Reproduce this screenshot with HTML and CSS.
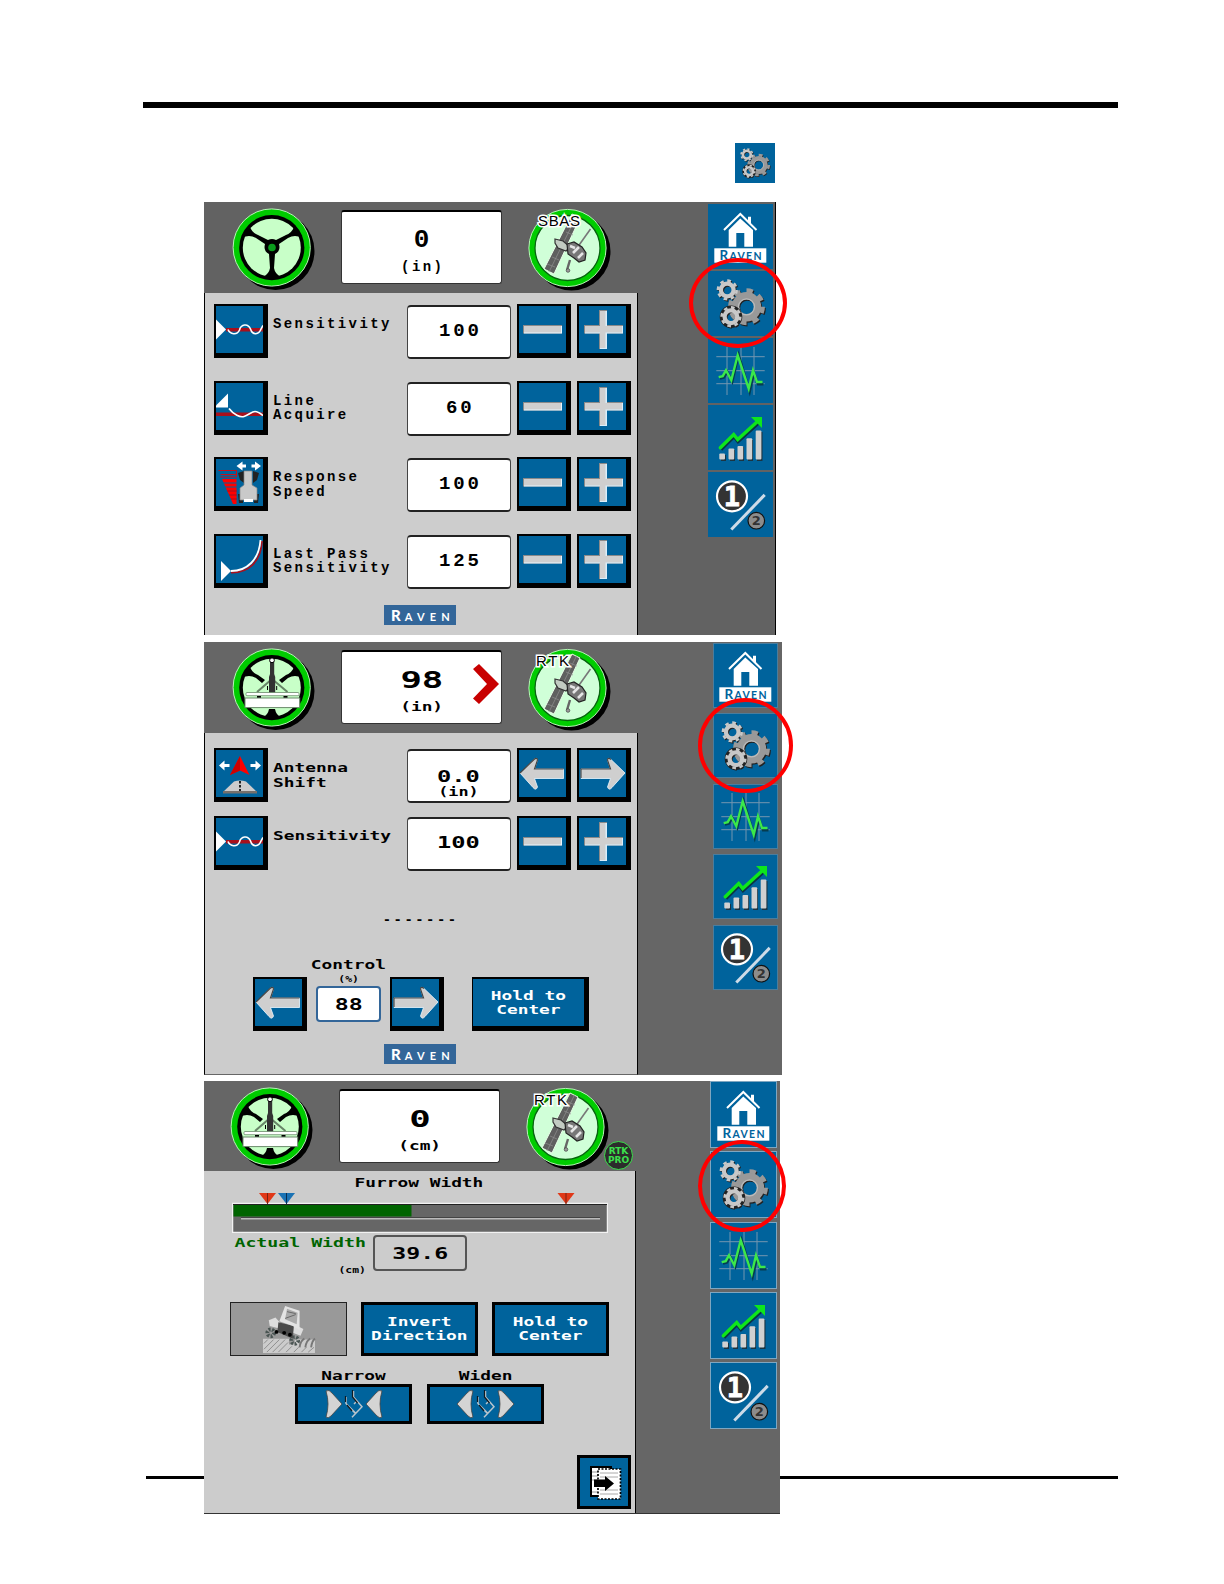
FILE: index.html
```
<!DOCTYPE html>
<html lang="en">
<head>
    <meta charset="UTF-8">
    <meta name="viewport" content="width=device-width, initial-scale=1.0">
    <title>Raven Settings</title>
    <link rel="stylesheet" href="styles.css">
</head>
<body>
    <!-- Shared icons -->
    <svg class="sprite">
        <symbol id="gear" viewBox="-20 -20 40 40">
            <circle r="16.6" pathLength="16" stroke-width="4.6" stroke-dasharray="1 1"/>
            <circle r="11.3" stroke-width="7.6"/>
        </symbol>
        <symbol id="gears" viewBox="0 0 65 65">
            <g fill="none" stroke="#222">
                <use href="#gear" x="20" y="17.5" width="39" height="39"/>
                <use href="#gear" x="9" y="8.8" width="22.5" height="22.5"/>
                <use href="#gear" x="12.5" y="35.8" width="22.5" height="22.5"/>
            </g>
            <use href="#gear" x="19" y="16.3" width="39" height="39" fill="none" stroke="#999"/>
            <circle cx="38.5" cy="35.8" r="8" fill="none" stroke="#bbb" stroke-width="1.2"/>
            <g fill="none" stroke="#c8c8c8">
                <circle cx="23" cy="45.7" r="9.3" stroke="#222" stroke-width="4"/>
                <use href="#gear" x="8" y="7.7" width="22.5" height="22.5"/>
                <use href="#gear" x="11.7" y="34.5" width="22.5" height="22.5"/>
            </g>
        </symbol>
        <symbol id="home" viewBox="0 0 65 65">
            <path d="M16 26L32.3 10L48.5 26" fill="none" stroke="#fff" stroke-width="2"/>
            <path d="M40 17v-4.3h3v7zM20.7 42.7V26L32.3 14.5L45 26v16.7h-8.7V29h-8v13.7z" fill="#fff"/>
            <rect x="6.3" y="44.3" width="52" height="14.4" fill="#fff"/>
            <text x="11.5" y="56" class="raven-text" textLength="42"><tspan font-size="13.5">R</tspan>AVEN</text>
        </symbol>
        <symbol id="wave" viewBox="0 0 65 65">
            <path d="M19 9v48M33 9v48M46 9v48M8.3 18.7h48.4M8.3 32.7h48.4M8.3 45.7h48.4" stroke="#7397b0" fill="none"/>
            <path d="M12 40.5l4-1l3.3-5.7l5 10l6.4-27l11 37l4.3-19l4 11.5h5.5" fill="none" stroke="#053d50" stroke-width="2.4"/>
            <path d="M10.7 39.2l4-1l3.3-5.9l5.3 10l6.4-25l11 33.400l4.3-18.400l4 11.7h5.5" fill="none" stroke="#3be84a" stroke-width="2.4"/>
        </symbol>
        <symbol id="chart" viewBox="0 0 65 65">
            <path d="M13 50h5v6h-5zM22 45h5v11h-5zM31 42h5v14h-5zM40 35h5v21h-5zM49 27h5.5v29H49z" fill="#1b3442"/>
            <g fill="#d0d0d0">
                <rect x="11.3" y="48.5" width="5.7" height="6" rx="1"/>
                <rect x="20.5" y="43.5" width="5.7" height="11" rx="1"/>
                <rect x="29.5" y="41" width="5.7" height="13.5" rx="1"/>
                <rect x="38.5" y="33.2" width="5.7" height="21.3" rx="1"/>
                <rect x="47.7" y="25.4" width="5.7" height="29.1" rx="1"/>
            </g>
            <path d="M13 44.5L26 31.5l4 5L50 18.5" fill="none" stroke="#0b3345" stroke-width="3.4"/>
            <path d="M12.3 42.7L25.7 29.5l4 5L50 16" fill="none" stroke="#0ee61c" stroke-width="3.4" stroke-linecap="round"/>
            <path d="M43 12h11v11z" fill="#0ee61c"/>
        </symbol>
        <symbol id="one-two" viewBox="0 0 65 65">
            <path d="M56.7 22.9L23.3 57.5" stroke="#cddbe8" stroke-width="3"/>
            <circle cx="24" cy="24.3" r="15" fill="#333" stroke="#fff" stroke-width="2.2"/>
            <text x="24" y="33.8" text-anchor="middle" class="num-one">1</text>
            <circle cx="48.3" cy="48.7" r="8.3" fill="#8c8c8c" stroke="#111" stroke-width="1.2"/>
            <text x="48.3" y="53.4" text-anchor="middle" class="num-two">2</text>
        </symbol>
        <symbol id="wheel-base" viewBox="0 0 84 84">
            <circle cx="43.5" cy="43" r="39" fill="#000"/>
            <circle cx="39.7" cy="39.5" r="38.6" fill="#0c0" stroke="#b6f5b6" stroke-width="1"/>
            <circle cx="39.8" cy="39.7" r="32.6" fill="#000"/>
            <circle cx="39.8" cy="39.7" r="29" fill="#c8ffc8"/>
        </symbol>
        <symbol id="wheel" viewBox="0 0 84 84">
            <use href="#wheel-base"/>
            <path d="M10 30L17 17Q20 25 26 27L36 32Q40 30 44 32L54 27Q60 25 63 17L70 30Q63 26 56 30L47 36Q49 43 43 46L42 60Q43 66 49 69H31Q37 66 38 60L37 46Q31 43 33 36L24 30Q17 26 10 30z"/>
            <circle cx="40" cy="39.5" r="3.8" fill="#0a9c1c"/>
        </symbol>
        <symbol id="implement" viewBox="0 0 84 84">
            <use href="#wheel-base"/>
            <path d="M10 30L17 17Q20 25 26 27L33 32L30 35L24 30Q17 26 10 30zM70 30L63 17Q60 25 54 27L47 32L50 35L56 30Q63 26 70 30zM31 69Q36 67 37 61h6Q44 67 49 69z"/>
            <path d="M40 31L25 44M40 31L55.5 44" stroke="#678567" stroke-width="2"/>
            <path d="M35.5 38v4M44.7 38v4" stroke="#000"/>
            <path d="M38 14h4.2v12l1 3v16H37V29l1-3z" fill="#333"/>
            <circle cx="40" cy="12.3" r="2.4" fill="#fff" stroke="#000"/>
            <rect x="14" y="44.5" width="53" height="3.2" rx="1" fill="#fff" stroke="#6a8a6a" stroke-width=".8"/>
            <path d="M25 48h4v2h-4zM51.5 48h4v2h-4z"/>
            <rect x="13" y="50" width="54.7" height="9.6" fill="#fff" stroke="#6a8a6a"/>
        </symbol>
        <symbol id="satellite" viewBox="0 0 84 84">
            <circle cx="44.5" cy="43.5" r="39" fill="#000"/>
            <circle cx="40.5" cy="40" r="38.6" fill="#0c0" stroke="#b6f5b6"/>
            <circle cx="40.5" cy="40" r="32.5" fill="#d0ffd8" stroke="#07640f" stroke-width="1.3"/>
            <path d="M45 6l8 4-26 56-10-5z" fill="#5f5f5f" stroke="#e8ffe8"/>
            <path d="M49.5 8L22 64M43 15l7 3M39 24l7 3M25 49l7 3M20 56l8 3" stroke="#8f8f8f" stroke-width=".7"/>
            <path d="M63.500 21L50 40" stroke="#777" stroke-width="1.6"/>
            <path d="M43 52l-3 10" stroke="#666" stroke-width="2.4"/>
            <circle cx="41" cy="62.5" r="1.8" fill="#9a9a9a" stroke="#444" stroke-width=".7"/>
            <path d="M28 31l8 2 7 6-4 4-8-3-3-5z" fill="#c2cbc2" stroke="#333" stroke-width="1.2"/>
            <path d="M40 36l7-2 8 5 4 6-1 7-6 2-5-4-6-4z" fill="#777" stroke="#222" stroke-width="1.2"/>
            <path d="M43 38l5 2M46 45l6-6M51 50l5-5" stroke="#e5e5e5" stroke-width="2.6"/>
        </symbol>
        <symbol id="minus" viewBox="0 0 47 47">
            <path d="M4 19h39v8.5H4z" fill="#8a8a8a"/>
            <path d="M5 20h38v7.5H5z" fill="#e9f6ff"/>
            <path d="M5 20h37v6.5H5z" fill="#cfcfcf"/>
        </symbol>
        <symbol id="plus" viewBox="0 0 47 47">
            <path d="M5 19h15V4h8v15h16v8.5H28V43h-8V27.5H5z" fill="#8a8a8a"/>
            <path d="M6 20h15V5h7v15h16v7.5H28V43h-7V27.5H6z" fill="#d9eefb"/>
            <path d="M6 20h15V5h5.5v15H43v6.5H26.5V42H21V26.5H6z" fill="#cfcfcf"/>
        </symbol>
        <symbol id="arrow-left" viewBox="0 0 47 47">
            <path d="M1 23L15 9.500Q18 7 18.500 10L15.500 19H44.500v9.500H15.500L18.500 37Q17 41 14 37.500z" fill="#cfcfcf" stroke="#ecf7ff" stroke-width=".8"/>
            <path d="M1 23L15 9.500Q18 7 18.500 10L15.500 19H44.500" fill="none" stroke="#444" stroke-width="1.2"/>
        </symbol>
        <symbol id="arrow-right" viewBox="0 0 47 47">
            <path d="M46 23L32 9.500Q29 7 28.500 10L31.500 19H2v9.500h29.500L28.500 37Q30 41 33 37.500z" fill="#cfcfcf" stroke="#ecf7ff" stroke-width=".8"/>
            <path d="M32 9.500Q29 7 28.500 10L31.500 19H2v9" fill="none" stroke="#444" stroke-width="1.2"/>
        </symbol>
        <symbol id="sensitivity" viewBox="0 0 47 47">
            <path d="M10 22h37v3.5H10z" fill="#a8101c"/>
            <path d="M0 13.5L10 23.5L0 33.5z" fill="#fff"/>
            <path d="M12 23.5C14 28.5 21 29.5 23.5 24C25 18 32 17 34.5 23C36.5 29.5 43 29 45 23L47 19.5" fill="none" stroke="#fff" stroke-width="1.6"/>
        </symbol>
        <symbol id="acquire" viewBox="0 0 47 47">
            <path d="M0 29.5h47V33H0z" fill="#a8101c"/>
            <path d="M0 22.5L12 10.5v14H0z" fill="#fff"/>
            <path d="M13 25.5C18 32 24 34.5 28 33.5S36 28.5 39 28.5S44 30 47 32.5" fill="none" stroke="#fff" stroke-width="1.7"/>
        </symbol>
        <symbol id="response" viewBox="0 0 47 47">
            <path d="M2.5 11.5h18v4h-16M4.5 18h16v-6" fill="none" stroke="#c4101c"/>
            <path d="M6 20h14.5v25H17z" fill="#f00"/>
            <path d="M7 24h14M9 28h12" stroke="#00639c"/>
            <path d="M11 32h10M13 36h8M15 40h6" stroke="#a01020"/>
            <path d="M20.5 7l6-4.5v3H30v3h-3.500v3zM45 7l-6-4.500v3h-3.500v3H39v3z" fill="#fff"/>
            <path d="M22 14l6-2v12l-4-3zM43 14l-6-2v12l4-3zM22 35h5v9h-4zM43 35h-5v9h4z" fill="#222"/>
            <path d="M28 12h8v14l5 3v12H24V29l4-3z" fill="#c9c9c9" stroke="#888" stroke-width=".7"/>
            <path d="M28 40h9v3h-9z" fill="#fff"/>
        </symbol>
        <symbol id="last-pass" viewBox="0 0 47 47">
            <path d="M15 36.5C32 37 45 26 46 5" fill="none" stroke="#a8101c" stroke-width="1.8"/>
            <path d="M15 35C31 35 43 24 44.5 4" fill="none" stroke="#fff" stroke-width="1.8"/>
            <path d="M5 25L15 35L5 45z" fill="#fff"/>
        </symbol>
        <symbol id="antenna" viewBox="0 0 47 47">
            <path d="M24 6l9.5 19L24 20.5L14 25z" fill="#f00"/>
            <path d="M24 6v14.5L14 25z" fill="#c00"/>
            <path d="M3 15.5l5.5-5v3.5h5v3h-5v3.5zM45 15.5l-5.500-5v3.500h-5v3h5v3.500z" fill="#fff"/>
            <path d="M7 42l11-10.500q6-2 12 0L41 42z" fill="#ccc"/>
            <path d="M7 41h34v2.5H7z" fill="#77706a"/>
            <path d="M24 31v10" stroke="#222" stroke-width="2" stroke-dasharray="2.5 1.5"/>
        </symbol>
        <symbol id="rail" viewBox="0 0 20 30">
            <path d="M2 8v6.500l10 10M9.500 2v6l8.500 9.700L8 28.300M8 21l4 4M13 12l-3 3" fill="none" stroke="#b9c4cc" stroke-width="1.5"/>
            <path d="M1.500 7v6M8.500 1v7l5 6M3 16l5 6" fill="none" stroke="#101a20" stroke-width="1.2"/>
        </symbol>
    </svg>

    <div class="page">
        <header class="page-header">
            <svg class="page-icon"><use href="#gears"/></svg>
        </header>
        <div class="page-rule"></div>

        <!-- Steering settings -->
        <section class="screen screen-one">
            <div class="main">
                <div class="top">
                    <svg class="round"><use href="#wheel"/></svg>
                    <div class="display"><b>0</b><span>(in)</span></div>
                    <svg class="round sat"><use href="#satellite"/><text x="11" y="18" class="fix" textLength="42">SBAS</text></svg>
                </div>
                <div class="body">
                    <div class="row">
                        <svg class="key"><use href="#sensitivity"/></svg>
                        <div class="label"><span>Sensitivity</span></div>
                        <div class="value"><span>100</span></div>
                        <svg class="key"><use href="#minus"/></svg>
                        <svg class="key"><use href="#plus"/></svg>
                    </div>
                    <div class="row">
                        <svg class="key"><use href="#acquire"/></svg>
                        <div class="label"><span>Line<br>Acquire</span></div>
                        <div class="value"><span>60</span></div>
                        <svg class="key"><use href="#minus"/></svg>
                        <svg class="key"><use href="#plus"/></svg>
                    </div>
                    <div class="row">
                        <svg class="key"><use href="#response"/></svg>
                        <div class="label"><span>Response<br>Speed</span></div>
                        <div class="value"><span>100</span></div>
                        <svg class="key"><use href="#minus"/></svg>
                        <svg class="key"><use href="#plus"/></svg>
                    </div>
                    <div class="row">
                        <svg class="key"><use href="#last-pass"/></svg>
                        <div class="label"><span>Last Pass<br>Sensitivity</span></div>
                        <div class="value"><span>125</span></div>
                        <svg class="key"><use href="#minus"/></svg>
                        <svg class="key"><use href="#plus"/></svg>
                    </div>
                    <div class="logo"><b>R</b>AVEN</div>
                </div>
            </div>
            <div class="side">
                <svg><use href="#home"/></svg>
                <svg><use href="#gears"/></svg>
                <svg><use href="#wave"/></svg>
                <svg><use href="#chart"/></svg>
                <svg><use href="#one-two"/></svg>
            </div>
            <div class="ring"></div>
        </section>

        <!-- Implement settings -->
        <section class="screen screen-two wide">
            <div class="main">
                <div class="top">
                    <svg class="round"><use href="#implement"/></svg>
                    <div class="display"><b>98</b><span>(in)</span>
                        <svg class="chevron" viewBox="0 0 26 40"><path d="M0 5L6 0L26 20L6 40L0 34.5L14 20z" fill="#c80000"/></svg>
                    </div>
                    <svg class="round sat"><use href="#satellite"/><text x="9" y="18" class="fix" textLength="33">RTK</text></svg>
                </div>
                <div class="body">
                    <div class="row">
                        <svg class="key"><use href="#antenna"/></svg>
                        <div class="label"><span>Antenna<br>Shift</span></div>
                        <div class="value with-unit"><span>0.0</span><small>(in)</small></div>
                        <svg class="key"><use href="#arrow-left"/></svg>
                        <svg class="key"><use href="#arrow-right"/></svg>
                    </div>
                    <div class="row">
                        <svg class="key"><use href="#sensitivity"/></svg>
                        <div class="label"><span>Sensitivity</span></div>
                        <div class="value"><span>100</span></div>
                        <svg class="key"><use href="#minus"/></svg>
                        <svg class="key"><use href="#plus"/></svg>
                    </div>
                    <div class="dashes">-------</div>
                    <div class="control">
                        <svg class="key"><use href="#arrow-left"/></svg>
                        <div class="control-box">
                            <span class="caption">Control</span>
                            <span class="unit">(%)</span>
                            <div class="percent"><span>88</span></div>
                        </div>
                        <svg class="key"><use href="#arrow-right"/></svg>
                        <div class="btn"><span>Hold to<br>Center</span></div>
                    </div>
                    <div class="logo"><b>R</b>AVEN</div>
                </div>
            </div>
            <div class="side">
                <svg><use href="#home"/></svg>
                <svg><use href="#gears"/></svg>
                <svg><use href="#wave"/></svg>
                <svg><use href="#chart"/></svg>
                <svg><use href="#one-two"/></svg>
            </div>
            <div class="ring"></div>
        </section>

        <!-- Furrow width -->
        <section class="screen screen-three wide">
            <div class="main">
                <div class="top">
                    <svg class="round"><use href="#implement"/></svg>
                    <div class="display"><b>0</b><span>(cm)</span></div>
                    <svg class="round sat"><use href="#satellite"/><text x="9" y="18" class="fix" textLength="33">RTK</text></svg>
                    <div class="pro">RTK<br>PRO</div>
                </div>
                <div class="body">
                    <div class="title"><span>Furrow Width</span></div>
                    <svg class="gauge" viewBox="0 0 376 40">
                        <rect x=".5" y="10.5" width="375" height="29" fill="#666" stroke="#f2f2f2" stroke-width="1.5"/>
                        <path d="M1 11.5h374" stroke="#222"/>
                        <rect x="1.5" y="12" width="178" height="11.5" fill="#006400"/>
                        <path d="M9 25.5h359" stroke="#bbb" stroke-width="2"/>
                        <path d="M9 24.5h359" stroke="#444"/>
                        <path d="M27 0h17l-8.5 11z" fill="#e03818"/><path d="M35.5 0v11" stroke="#7b2010"/>
                        <path d="M46 0h17l-8.5 11z" fill="#1a72b4"/><path d="M54.5 0v11" stroke="#082c50"/>
                        <path d="M325.5 0h17l-8.5 11z" fill="#e03818"/><path d="M334 0v11" stroke="#7b2010"/>
                    </svg>
                    <div class="actual">
                        <div class="actual-text"><span class="caption">Actual Width</span><span class="unit">(cm)</span></div>
                        <div class="actual-value"><span>39.6</span></div>
                    </div>
                    <div class="buttons">
                        <svg class="tractor" viewBox="0 0 117 54">
                            <path d="M32 37h27v6h6v-5h21v14H32z" fill="#ccc"/>
                            <path d="M33 42l4-4M33 48l10-10M36 51l13-13M42 51l13-13M48 51l10-10M56 51l6-6M64 51l5-5M72 51l5-5M79 51l6-5" stroke="#8d8d8d"/>
                            <path d="M70 46q1-7 5-9M76 46q1-7 5-9M82 46q1-7 4-9" fill="none" stroke="#777" stroke-width="2"/>
                            <g fill="none" stroke="#4a5553" stroke-width="4" stroke-dasharray="2 1.5"><circle cx="40" cy="31" r="3.5"/><circle cx="65" cy="39" r="3.5"/></g>
                            <path d="M38 18l7-3 7 8-5 3-8-2zM64 22l10 5-3 7-8-3z" fill="#ddd"/>
                            <path d="M48 20l16 4-1 13-16-7z" fill="#4a4a4a"/>
                            <path d="M55 3l15 5 0 20-7-4-14-5z" fill="#e3e3e3"/>
                            <path d="M57 6l11 4-1 12-12-5z" fill="#aaa"/><path d="M55 16l11-4M57 9l9 2" stroke="#666"/>
                            <circle cx="54" cy="31" r="2" fill="#000"/><circle cx="60" cy="33" r="2" fill="#000"/><circle cx="46" cy="30" r="2" fill="#000"/>
                        </svg>
                        <div class="btn"><span>Invert<br>Direction</span></div>
                        <div class="btn"><span>Hold to<br>Center</span></div>
                    </div>
                    <div class="moves">
                        <div class="move">
                            <span class="caption">Narrow</span>
                            <svg class="move-btn" viewBox="0 0 117 40">
                                <path d="M31 7q3-2 6 2l10 11-11 12q-3 3-5 1 4-13 0-26z" fill="#d4d4d4" stroke="#444" stroke-width=".8"/>
                                <path d="M87 7q-3-2-6 2L71 20l11 12q3 3 5 1-4-13 0-26z" fill="#d4d4d4" stroke="#444" stroke-width=".8"/>
                                <use href="#rail" x="49" y="5" width="20" height="30"/>
                            </svg>
                        </div>
                        <div class="move">
                            <span class="caption">Widen</span>
                            <svg class="move-btn" viewBox="0 0 117 40">
                                <path d="M46 7q-3-2-6 2L30 20l11 12q3 3 5 1-4-13 0-26z" fill="#d4d4d4" stroke="#444" stroke-width=".8"/>
                                <path d="M71 7q3-2 6 2l10 11-11 12q-3 3-5 1 4-13 0-26z" fill="#d4d4d4" stroke="#444" stroke-width=".8"/>
                                <use href="#rail" x="49" y="5" width="20" height="30"/>
                            </svg>
                        </div>
                    </div>
                    <svg class="next" viewBox="0 0 54 54">
                        <path d="M13 11h22v31H13z" fill="#000"/><path d="M15 13h18v27H15z" fill="#fff"/>
                        <path d="M15 17h18M15 21h18M15 25h18M15 37h18" stroke="#999"/>
                        <rect x="21" y="14" width="22.5" height="30" fill="#fff" stroke="#000" stroke-width="1.7" stroke-dasharray="2 1.5"/>
                        <path d="M23 18h18M23 22h18M23 35h18M23 39h18" stroke="#aaa"/>
                        <path d="M17 24.500h11V21l9 7.500-9 7.500v-4H17z"/>
                    </svg>
                </div>
            </div>
            <div class="side">
                <svg><use href="#home"/></svg>
                <svg><use href="#gears"/></svg>
                <svg><use href="#wave"/></svg>
                <svg><use href="#chart"/></svg>
                <svg><use href="#one-two"/></svg>
            </div>
            <div class="ring"></div>
        </section>
    </div>
</body>
</html>
```
FILE: styles.css
```
* {
    box-sizing: border-box;
}

body {
    margin: 0;
    background-color: #fff;
    font-family: "DejaVu Sans Mono", monospace;
    font-weight: bold;
    color: #000;
}

.sprite {
    display: none;
}

.page {
    position: relative;
    width: 1224px;
    height: 1584px;
    padding: 102px 106px 0 143px;
}

.page-header {
    height: 100px;
    border-top: 6px solid #000;
    padding: 35px 0 0 592px;
}

.page-icon {
    display: block;
    width: 40px;
    height: 40px;
    background-color: #00639c;
}

/* Footer line runs behind the last screen */
.page-rule {
    position: absolute;
    left: 146px;
    right: 106px;
    top: 1476px;
    height: 3px;
    background-color: #000;
}

/* Screens */
.screen {
    position: relative;
    display: flex;
    width: 572px;
    height: 433px;
    margin: 0 0 7px 61px;
    background-color: #626262;
}

.screen-one {
    border-right: 1px solid #000;
}

.screen-two {
    width: 578px;
    margin-bottom: 6px;
    background-color: #666;
}

.screen-three {
    width: 576px;
    background-color: #666;
    border-bottom: 1px solid #333;
}

.main {
    width: 434px;
    display: flex;
    flex-direction: column;
}

.screen-three .main {
    width: 432px;
}

.top {
    position: relative;
    display: flex;
    height: 91px;
    flex: none;
    padding: 6px 0 0 28px;
}

.screen-three .top {
    height: 90px;
    padding-left: 26px;
}

.round {
    width: 84px;
    height: 84px;
}

.sat {
    margin-left: 26px;
}

.fix {
    font: 15px "Liberation Sans", sans-serif;
    fill: #000;
    stroke: #fff;
    stroke-width: 3px;
    paint-order: stroke;
}

.display {
    position: relative;
    display: flex;
    flex-direction: column;
    align-items: center;
    width: 161px;
    height: 74px;
    margin: 2px -1px 0 25px;
    padding-top: 14px;
    background-color: #fff;
    border: 1px solid #333;
    border-top: 2px solid #000;
    border-radius: 3px;
}

.display b {
    font-size: 23px;
    line-height: 28px;
}

.display span {
    font-size: 13px;
    line-height: 18px;
    margin-top: 4px;
}

.screen-one .display b {
    font-size: 26px;
}

.screen-one .display span {
    font-size: 14px;
    letter-spacing: 2.4px;
    margin-right: -2.4px;
}

.wide .display b {
    transform: scaleX(1.55);
}

.wide .display span {
    transform: scaleX(1.37);
}

.chevron {
    position: absolute;
    right: 2px;
    top: 12px;
    width: 26px;
    height: 40px;
}

.pro {
    position: absolute;
    left: 400px;
    top: 60px;
    width: 29px;
    height: 29px;
    padding-top: 5px;
    border: 1px solid #3ce04c;
    border-radius: 50%;
    background-color: #2c2c2c;
    color: #3ce04c;
    font: bold 9px/9px "DejaVu Sans", sans-serif;
    text-align: center;
}

/* Settings area */
.body {
    flex: 1;
    padding: 11px 0 0 9px;
    background-color: #cdcdcd;
    border-left: 1px solid #000;
    border-right: 1px solid #000;
}

.wide .body {
    background-color: #ccc;
}

.screen-two .body {
    padding-top: 15px;
    border-bottom: 1px solid #666;
}

.screen-three .body {
    padding: 4px 0 0 26px;
    border-left: none;
}

.row {
    display: flex;
    height: 54px;
    margin-bottom: 22.7px;
}

.screen-two .row {
    margin-bottom: 14px;
}

.key {
    flex: none;
    width: 54px;
    height: 54px;
    margin-right: 6px;
    background-color: #00639c;
    border: solid #000;
    border-width: 2px 5px 5px 2px;
}

.label {
    width: 135px;
    margin-left: -1px;
    padding-top: 13px;
    font-size: 13px;
    line-height: 14.4px;
}

.label span {
    display: inline-block;
}

.screen-one .label {
    font-family: "Liberation Mono", monospace;
    font-size: 14px;
    letter-spacing: 2.4px;
    white-space: nowrap;
}

.wide .label {
    line-height: 14.8px;
    padding-left: -1px;
}

.wide .label span {
    transform: scaleX(1.37);
    transform-origin: left;
}

.value {
    display: flex;
    flex-direction: column;
    align-items: center;
    justify-content: center;
    width: 105px;
    height: 54px;
    margin: 1px 6px 0 0;
    padding-bottom: 4px;
    background-color: #fff;
    border: 1px solid #444;
    border-top: 2px solid #222;
    border-bottom: 2px solid #222;
    border-radius: 4px;
    font-size: 16px;
}

.screen-one .value,
.screen-one .display {
    font-family: "Liberation Mono", monospace;
}

.screen-one .value {
    padding-bottom: 2px;
    font-size: 19px;
}

.screen-one .value span {
    letter-spacing: 2.9px;
    margin-right: -2.9px;
}

.wide .value span {
    transform: scaleX(1.48);
}

.value.with-unit {
    padding: 14px 0 0;
}

.with-unit span {
    line-height: 19px;
}

.with-unit small {
    font-size: 12px;
    line-height: 13px;
    transform: scaleX(1.4);
}

.logo {
    width: 72px;
    height: 20px;
    margin: -6px 0 0 170px;
    padding-left: 7px;
    background-color: #336699;
    color: #fff;
    font: bold 11px/20px Lato, sans-serif;
    letter-spacing: 5.2px;
    white-space: nowrap;
}

.logo b {
    font-size: 15px;
    letter-spacing: 4px;
}

.dashes {
    margin: 41px 0 0 169px;
    font-size: 13px;
    line-height: 18px;
    letter-spacing: 3px;
}

.title span {
    display: inline-block;
    transform: scaleX(1.37);
    white-space: nowrap;
}

.control {
    display: flex;
    align-items: flex-end;
    height: 76px;
    margin: 26px 0 0 39px;
}

.control .key {
    margin: 0;
}

.control-box {
    display: flex;
    flex-direction: column;
    align-items: center;
    width: 83px;
    padding-bottom: 9px;
}

.caption {
    font-size: 13px;
    line-height: 16px;
    transform: scaleX(1.37);
    white-space: nowrap;
}

.unit {
    font-size: 9.5px;
    line-height: 12px;
    transform: scaleX(1.2);
}

.percent {
    width: 65px;
    height: 36px;
    margin-top: 1px;
    border: 2px solid #336699;
    border-radius: 4px;
    background-color: #fff;
    font-size: 16px;
    line-height: 33px;
    text-align: center;
}

.percent span,
.actual-value span {
    display: inline-block;
    transform: scaleX(1.45);
}

.btn {
    width: 117px;
    height: 54px;
    padding-top: 10px;
    background-color: #00639c;
    border: 3px solid #000;
    color: #fff;
    font-size: 13px;
    line-height: 14.4px;
    text-align: center;
    white-space: nowrap;
}

.btn span {
    display: inline-block;
    transform: scaleX(1.37);
}

.control .btn {
    margin-left: 28px;
    border-width: 2px 5px 5px 1px;
}

.screen-two .logo {
    margin-top: 13px;
}

/* Furrow width */
.title {
    margin-left: 126px;
    width: 126px;
    font-size: 13px;
    line-height: 16px;
    text-align: center;
}

.gauge {
    display: block;
    width: 376px;
    height: 40px;
    margin: 2px 0 0 2px;
}

.actual {
    display: flex;
    margin-top: 2px;
    height: 36px;
}

.actual-text {
    display: flex;
    flex-direction: column;
    width: 136px;
    align-items: flex-end;
    color: #006400;
}

.actual-text span {
    transform-origin: right;
}

.actual-text .caption {
    transform: scaleX(1.4);
}

.actual-text .unit {
    color: #000;
    margin-top: 13px;
}

.actual-value {
    width: 94px;
    height: 36px;
    margin-left: 7px;
    padding-top: 1px;
    border: 2px solid #555;
    border-radius: 4px;
    font-size: 16px;
    line-height: 32px;
    text-align: center;
}

.buttons {
    display: flex;
    gap: 14px;
    margin-top: 31px;
}

.tractor {
    width: 117px;
    height: 54px;
    background-color: #999;
    border: 1px solid #222;
}

.moves {
    display: flex;
    gap: 15px;
    margin: 12px 0 0 65px;
}

.move {
    display: flex;
    flex-direction: column;
    align-items: center;
    width: 117px;
}

.move-btn {
    width: 117px;
    height: 40px;
    background-color: #00639c;
    outline: 3px solid #000;
    outline-offset: -3px;
}

.next {
    display: block;
    width: 54px;
    height: 54px;
    margin: 31px 0 0 347px;
    background-color: #00639c;
    outline: 3px solid #000;
    outline-offset: -3px;
}

/* Side menu */
.side {
    display: flex;
    flex-direction: column;
    flex: 1;
    align-items: flex-end;
    gap: 2px;
    padding: 2px 2px 0 0;
}

.side svg {
    flex: none;
    width: 65px;
    height: 65px;
    background-color: #00639c;
}

.screen-two .side {
    gap: 5.4px;
    padding: 1px 4px 0 0;
}

.screen-two .side svg {
    outline: 1px solid #4b7d9d;
    outline-offset: -1px;
}

.screen-three .side {
    gap: 3.3px;
    padding: 0 3px 0 0;
}

.screen-three .side svg {
    width: 67px;
    height: 67px;
    border: 1px solid #7fa6c0;
}

.raven-text {
    font: bold 10.5px Lato, sans-serif;
    fill: #00639c;
}

.num-one {
    font: bold 27px "DejaVu Sans Mono", monospace;
    fill: #fff;
    stroke: #fff;
    stroke-width: 0.8px;
}

.num-two {
    font: bold 13px "DejaVu Sans", sans-serif;
    fill: #333;
}

/* Red marker around the settings button */
.ring {
    position: absolute;
    left: 485px;
    top: 56px;
    width: 98px;
    height: 90px;
    border: 4px solid #f00;
    border-radius: 50%;
}

.screen-two .ring {
    left: 494px;
    width: 95px;
    height: 95px;
}

.screen-three .ring {
    left: 494px;
    top: 59px;
    width: 88px;
    height: 92px;
}
```
